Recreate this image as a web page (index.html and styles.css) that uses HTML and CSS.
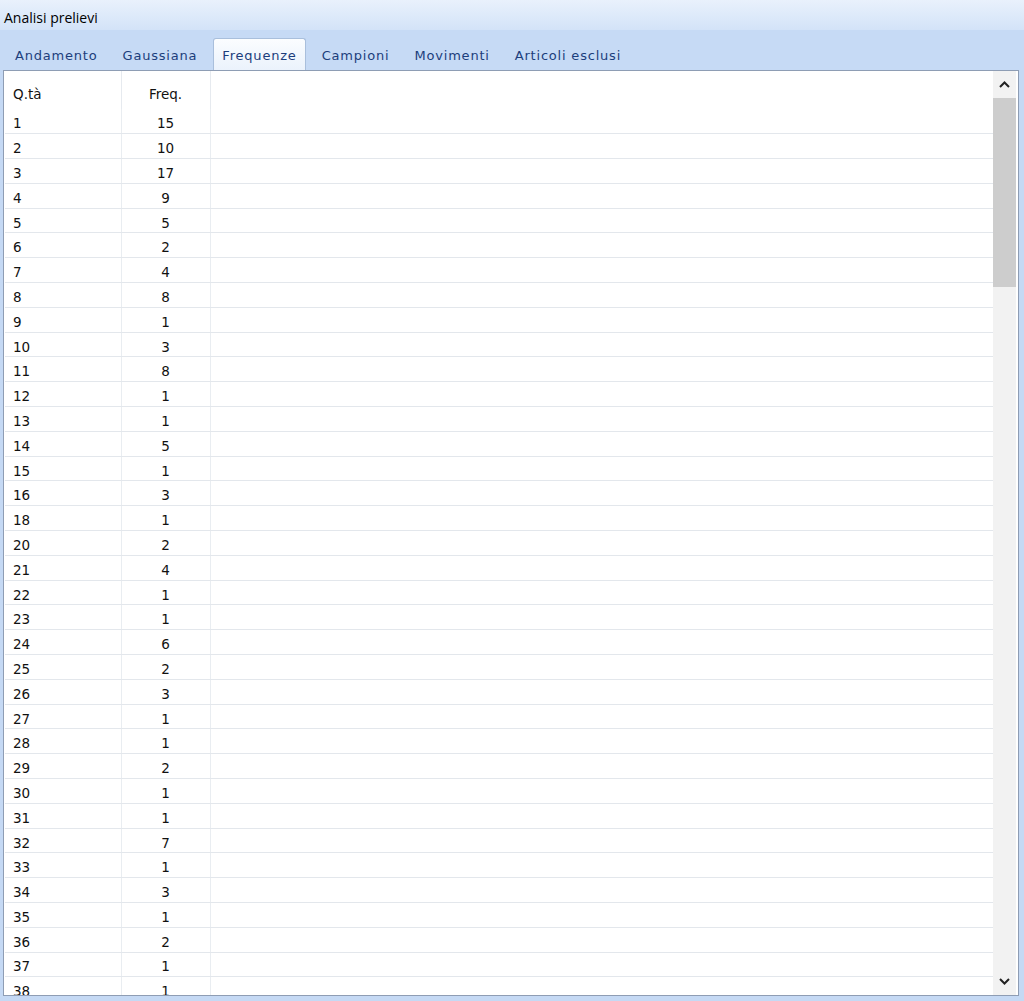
FILE: index.html
```html
<!DOCTYPE html>
<html lang="it">
<head>
  <meta charset="UTF-8" />
  <title>Analisi prelievi</title>
  <link rel="stylesheet" href="styles.css">
</head>
<body>
  <div class="window">
    <div class="titlebar">Analisi prelievi</div>

    <!-- Tab strip -->
    <div class="tabs">
      <div class="tab">Andamento</div>
      <div class="tab">Gaussiana</div>
      <div class="tab active">Frequenze</div>
      <div class="tab">Campioni</div>
      <div class="tab">Movimenti</div>
      <div class="tab">Articoli esclusi</div>
    </div>

    <div class="panel">
      <div class="list">
        <table class="freq-table">
          <thead>
            <tr>
              <th class="col-qty">Q.tà</th>
              <th class="col-freq">Freq.</th>
              <th class="col-rest"></th>
            </tr>
          </thead>
          <tbody>
            <tr><td>1</td><td class="num">15</td><td></td></tr>
            <tr><td>2</td><td class="num">10</td><td></td></tr>
            <tr><td>3</td><td class="num">17</td><td></td></tr>
            <tr><td>4</td><td class="num">9</td><td></td></tr>
            <tr><td>5</td><td class="num">5</td><td></td></tr>
            <tr><td>6</td><td class="num">2</td><td></td></tr>
            <tr><td>7</td><td class="num">4</td><td></td></tr>
            <tr><td>8</td><td class="num">8</td><td></td></tr>
            <tr><td>9</td><td class="num">1</td><td></td></tr>
            <tr><td>10</td><td class="num">3</td><td></td></tr>
            <tr><td>11</td><td class="num">8</td><td></td></tr>
            <tr><td>12</td><td class="num">1</td><td></td></tr>
            <tr><td>13</td><td class="num">1</td><td></td></tr>
            <tr><td>14</td><td class="num">5</td><td></td></tr>
            <tr><td>15</td><td class="num">1</td><td></td></tr>
            <tr><td>16</td><td class="num">3</td><td></td></tr>
            <tr><td>18</td><td class="num">1</td><td></td></tr>
            <tr><td>20</td><td class="num">2</td><td></td></tr>
            <tr><td>21</td><td class="num">4</td><td></td></tr>
            <tr><td>22</td><td class="num">1</td><td></td></tr>
            <tr><td>23</td><td class="num">1</td><td></td></tr>
            <tr><td>24</td><td class="num">6</td><td></td></tr>
            <tr><td>25</td><td class="num">2</td><td></td></tr>
            <tr><td>26</td><td class="num">3</td><td></td></tr>
            <tr><td>27</td><td class="num">1</td><td></td></tr>
            <tr><td>28</td><td class="num">1</td><td></td></tr>
            <tr><td>29</td><td class="num">2</td><td></td></tr>
            <tr><td>30</td><td class="num">1</td><td></td></tr>
            <tr><td>31</td><td class="num">1</td><td></td></tr>
            <tr><td>32</td><td class="num">7</td><td></td></tr>
            <tr><td>33</td><td class="num">1</td><td></td></tr>
            <tr><td>34</td><td class="num">3</td><td></td></tr>
            <tr><td>35</td><td class="num">1</td><td></td></tr>
            <tr><td>36</td><td class="num">2</td><td></td></tr>
            <tr><td>37</td><td class="num">1</td><td></td></tr>
            <tr><td>38</td><td class="num">1</td><td></td></tr>
            <tr><td>39</td><td class="num">2</td><td></td></tr>
            <tr><td>40</td><td class="num">1</td><td></td></tr>
          </tbody>
        </table>
      </div>

      <!-- Vertical scrollbar -->
      <div class="scrollbar">
        <div class="arrow">
          <svg width="11" height="7" viewBox="0 0 11 7"><path d="M1 6 L5.5 1.5 L10 6" fill="none" stroke="#222" stroke-width="2"/></svg>
        </div>
        <div class="track">
          <div class="thumb"></div>
        </div>
        <div class="arrow">
          <svg width="11" height="7" viewBox="0 0 11 7"><path d="M1 1 L5.5 5.5 L10 1" fill="none" stroke="#222" stroke-width="2"/></svg>
        </div>
      </div>
    </div>
  </div>
</body>
</html>
```

FILE: styles.css
```css
html, body {
  margin: 0;
  height: 100%;
  overflow: hidden;
}
body {
  font-family: "DejaVu Sans", sans-serif;
  color: #111;
  background: #c5d9f4;
}
.window {
  height: 1001px;
  display: flex;
  flex-direction: column;
}
.titlebar {
  height: 30px;
  line-height: 36px;
  padding-left: 4px;
  font-family: "Open Sans", sans-serif;
  font-size: 14px;
  color: #000;
  background: linear-gradient(#e9f1fc, #d3e3f8);
  box-sizing: border-box;
}
.tabs {
  height: 40px;
  display: flex;
  align-items: flex-end;
  gap: 7px;
  padding-left: 6px;
  background: #c6daf5;
}
.tab {
  height: 32px;
  line-height: 35px;
  padding: 0 9px;
  font-size: 13px;
  color: #1c3e7c;
  letter-spacing: 0.8px;
  box-sizing: border-box;
}
.tab.active {
  background: linear-gradient(#fbfdff, #eaf2fc);
  border: 1px solid #a9bfdc;
  border-bottom: none;
  border-radius: 3px 3px 0 0;
  margin-bottom: -1px;
  height: 33px;
  line-height: 34px;
  padding: 0 8px;
}
.panel {
  flex: 1;
  display: flex;
  margin: 0 5px 5px 3px;
  border: 1px solid #8e9db4;
  background: #fff;
  min-height: 0;
}
.list {
  flex: 1;
  overflow: hidden;
  padding-left: 1px;
}
.freq-table {
  width: 100%;
  border-collapse: collapse;
  font-size: 13.5px;
}
.freq-table th {
  height: 38px;
  padding: 8px 0 0 8px;
  font-weight: normal;
  text-align: left;
  border-right: 1px solid #e6eaef;
  box-sizing: border-box;
}
.freq-table th.col-qty {
  width: 116px;
}
.freq-table th.col-freq {
  width: 89px;
  text-align: center;
  padding-left: 0;
}
.freq-table th.col-rest {
  border-right: none;
}
.freq-table td {
  height: 24.8px;
  padding: 4px 0 0 8px;
  border-bottom: 1px solid #e3e7ec;
  border-right: 1px solid #e9edf1;
  box-sizing: border-box;
}
.freq-table td.num {
  text-align: center;
  padding-left: 0;
}
.freq-table td:last-child {
  border-right: none;
}
.scrollbar {
  width: 23px;
  display: flex;
  flex-direction: column;
  background: #f2f2f2;
  margin-right: 2px;
}
.arrow {
  height: 27px;
  display: flex;
  align-items: center;
  justify-content: center;
}
.track {
  flex: 1;
}
.thumb {
  height: 189px;
  background: #cdcdcd;
}
```
